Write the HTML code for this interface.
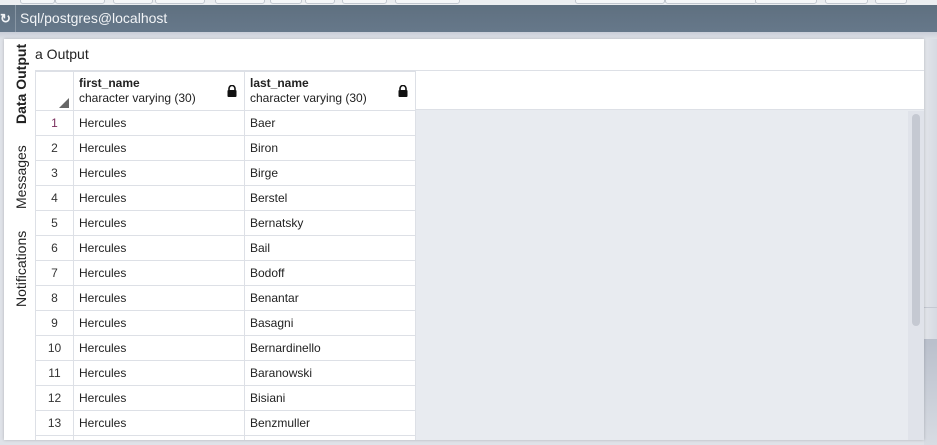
<!DOCTYPE html>
<html><head><style>
*{margin:0;padding:0;box-sizing:border-box}
html,body{width:937px;height:445px;overflow:hidden}
body{background:#dfe2e8;font-family:"Liberation Sans",Arial,sans-serif;position:relative}
.top{position:absolute;left:0;top:0;width:937px;height:6px;background:#eceef1}
.btn{position:absolute;top:-4px;height:8px;border:1px solid #c3c8d0;border-radius:3px;background:#f6f7f9}
.bar{position:absolute;left:0;top:5px;width:937px;height:27px;background:linear-gradient(#5f7080,#66788a);color:#f2f4f7;font-size:14px;line-height:27px}
.bar span{position:absolute;left:20px}
.bar i{position:absolute;left:15px;top:0;bottom:0;border-left:1px solid #8896a4}
.strip{position:absolute;left:0;top:32px;width:937px;height:7px;background:linear-gradient(#c9ced8,#dfe2e8)}
.rside{position:absolute;left:924px;top:39px;width:13px;height:406px;background:linear-gradient(90deg,#e2e5ea,#d6dae2)}
.panel{position:absolute;left:4px;top:39px;width:920px;height:401px;background:#fff;box-shadow:0 0 3px rgba(0,0,0,.2);overflow:hidden}
.tabs{position:absolute;left:0;top:0;width:31px;height:401px;background:#fff}
.vt{position:absolute;font-size:14px;color:#222;transform:rotate(-90deg);transform-origin:left top;white-space:nowrap}
.title{position:absolute;left:31px;top:0;width:889px;height:32px;border-bottom:1px solid #dde0e6;font-size:14px;line-height:30px;color:#222}
.grid{position:absolute;left:31px;top:32px;width:889px;height:369px;background:#e8ebf0;overflow:hidden}
table{border-collapse:collapse;position:absolute;left:0;top:0;background:#fff}
td,th{border:1px solid #dde0e6;font-size:12px;color:#222;height:25px;padding:0 0 0 5px;text-align:left;font-weight:normal}
th{height:39px;vertical-align:middle;line-height:15px;position:relative}
th b{font-weight:bold}
td.n{width:38px;text-align:center;padding:0;color:#333}
td.n1{color:#7a2d5c}
.c{width:171px}
.lock{position:absolute;right:7px;top:13px;width:10px;height:12px}
.hdr{position:absolute;left:0;top:0;width:889px;height:39px;background:#fff;border-bottom:1px solid #dde0e6}
.sb{position:absolute;left:873px;top:40px;width:16px;height:329px;background:#e0e3ea}
.th{position:absolute;left:4px;top:3px;width:8px;height:212px;border-radius:4px;background:#c5c9d2}
</style></head><body>
<div class="top">
<div class="btn" style="left:20px;width:35px"></div><div class="btn" style="left:55px;width:50px"></div>
<div class="btn" style="left:113px;width:40px"></div><div class="btn" style="left:155px;width:50px"></div>
<div class="btn" style="left:215px;width:50px"></div><div class="btn" style="left:270px;width:32px"></div>
<div class="btn" style="left:305px;width:30px"></div><div class="btn" style="left:342px;width:45px"></div>
<div class="btn" style="left:395px;width:65px"></div><div class="btn" style="left:575px;width:90px"></div>
<div class="btn" style="left:665px;width:92px"></div><div class="btn" style="left:755px;width:62px"></div>
<div class="btn" style="left:825px;width:43px"></div><div class="btn" style="left:875px;width:32px"></div>
</div>
<div class="bar"><span>Sql/postgres@localhost</span><i></i><b style="position:absolute;left:0;font-size:13px">&#8635;</b></div>
<div class="strip"></div>
<div class="rside"><div style="position:absolute;top:268px;left:0;width:13px;border-top:1px solid #c5c9d2"></div><div style="position:absolute;top:300px;left:0;width:13px;height:106px;background:linear-gradient(#b9bfcb,#d8dce3)"></div></div>
<div class="panel">
<div class="tabs">
<div class="vt" style="left:9px;top:85px;font-weight:bold">Data Output</div>
<div class="vt" style="left:9px;top:170px">Messages</div>
<div class="vt" style="left:9px;top:268px">Notifications</div>
</div>
<div class="title">a Output</div>
<div class="grid">
<div class="hdr"></div>
<table>
<tr><th style="width:38px;padding:0"><svg style="position:absolute;left:23px;top:26px" width="10" height="10"><path d="M10 0L10 10L0 10Z" fill="#666"/></svg></th>
<th class="c"><b>first_name</b><br>character varying (30)<svg class="lock" viewBox="0 0 10 12"><path d="M2 5V3.5a3 3 0 0 1 6 0V5" stroke="#111" stroke-width="1.6" fill="none"/><rect x="0.5" y="5" width="9" height="7" rx="1" fill="#111"/></svg></th>
<th class="c"><b>last_name</b><br>character varying (30)<svg class="lock" viewBox="0 0 10 12"><path d="M2 5V3.5a3 3 0 0 1 6 0V5" stroke="#111" stroke-width="1.6" fill="none"/><rect x="0.5" y="5" width="9" height="7" rx="1" fill="#111"/></svg></th></tr>
<tr><td class="n n1">1</td><td>Hercules</td><td>Baer</td></tr>
<tr><td class="n">2</td><td>Hercules</td><td>Biron</td></tr>
<tr><td class="n">3</td><td>Hercules</td><td>Birge</td></tr>
<tr><td class="n">4</td><td>Hercules</td><td>Berstel</td></tr>
<tr><td class="n">5</td><td>Hercules</td><td>Bernatsky</td></tr>
<tr><td class="n">6</td><td>Hercules</td><td>Bail</td></tr>
<tr><td class="n">7</td><td>Hercules</td><td>Bodoff</td></tr>
<tr><td class="n">8</td><td>Hercules</td><td>Benantar</td></tr>
<tr><td class="n">9</td><td>Hercules</td><td>Basagni</td></tr>
<tr><td class="n">10</td><td>Hercules</td><td>Bernardinello</td></tr>
<tr><td class="n">11</td><td>Hercules</td><td>Baranowski</td></tr>
<tr><td class="n">12</td><td>Hercules</td><td>Bisiani</td></tr>
<tr><td class="n">13</td><td>Hercules</td><td>Benzmuller</td></tr>
<tr><td class="n"></td><td></td><td></td></tr>
</table>
<div class="sb"><div class="th"></div></div>
</div>
</div>
</body></html>
